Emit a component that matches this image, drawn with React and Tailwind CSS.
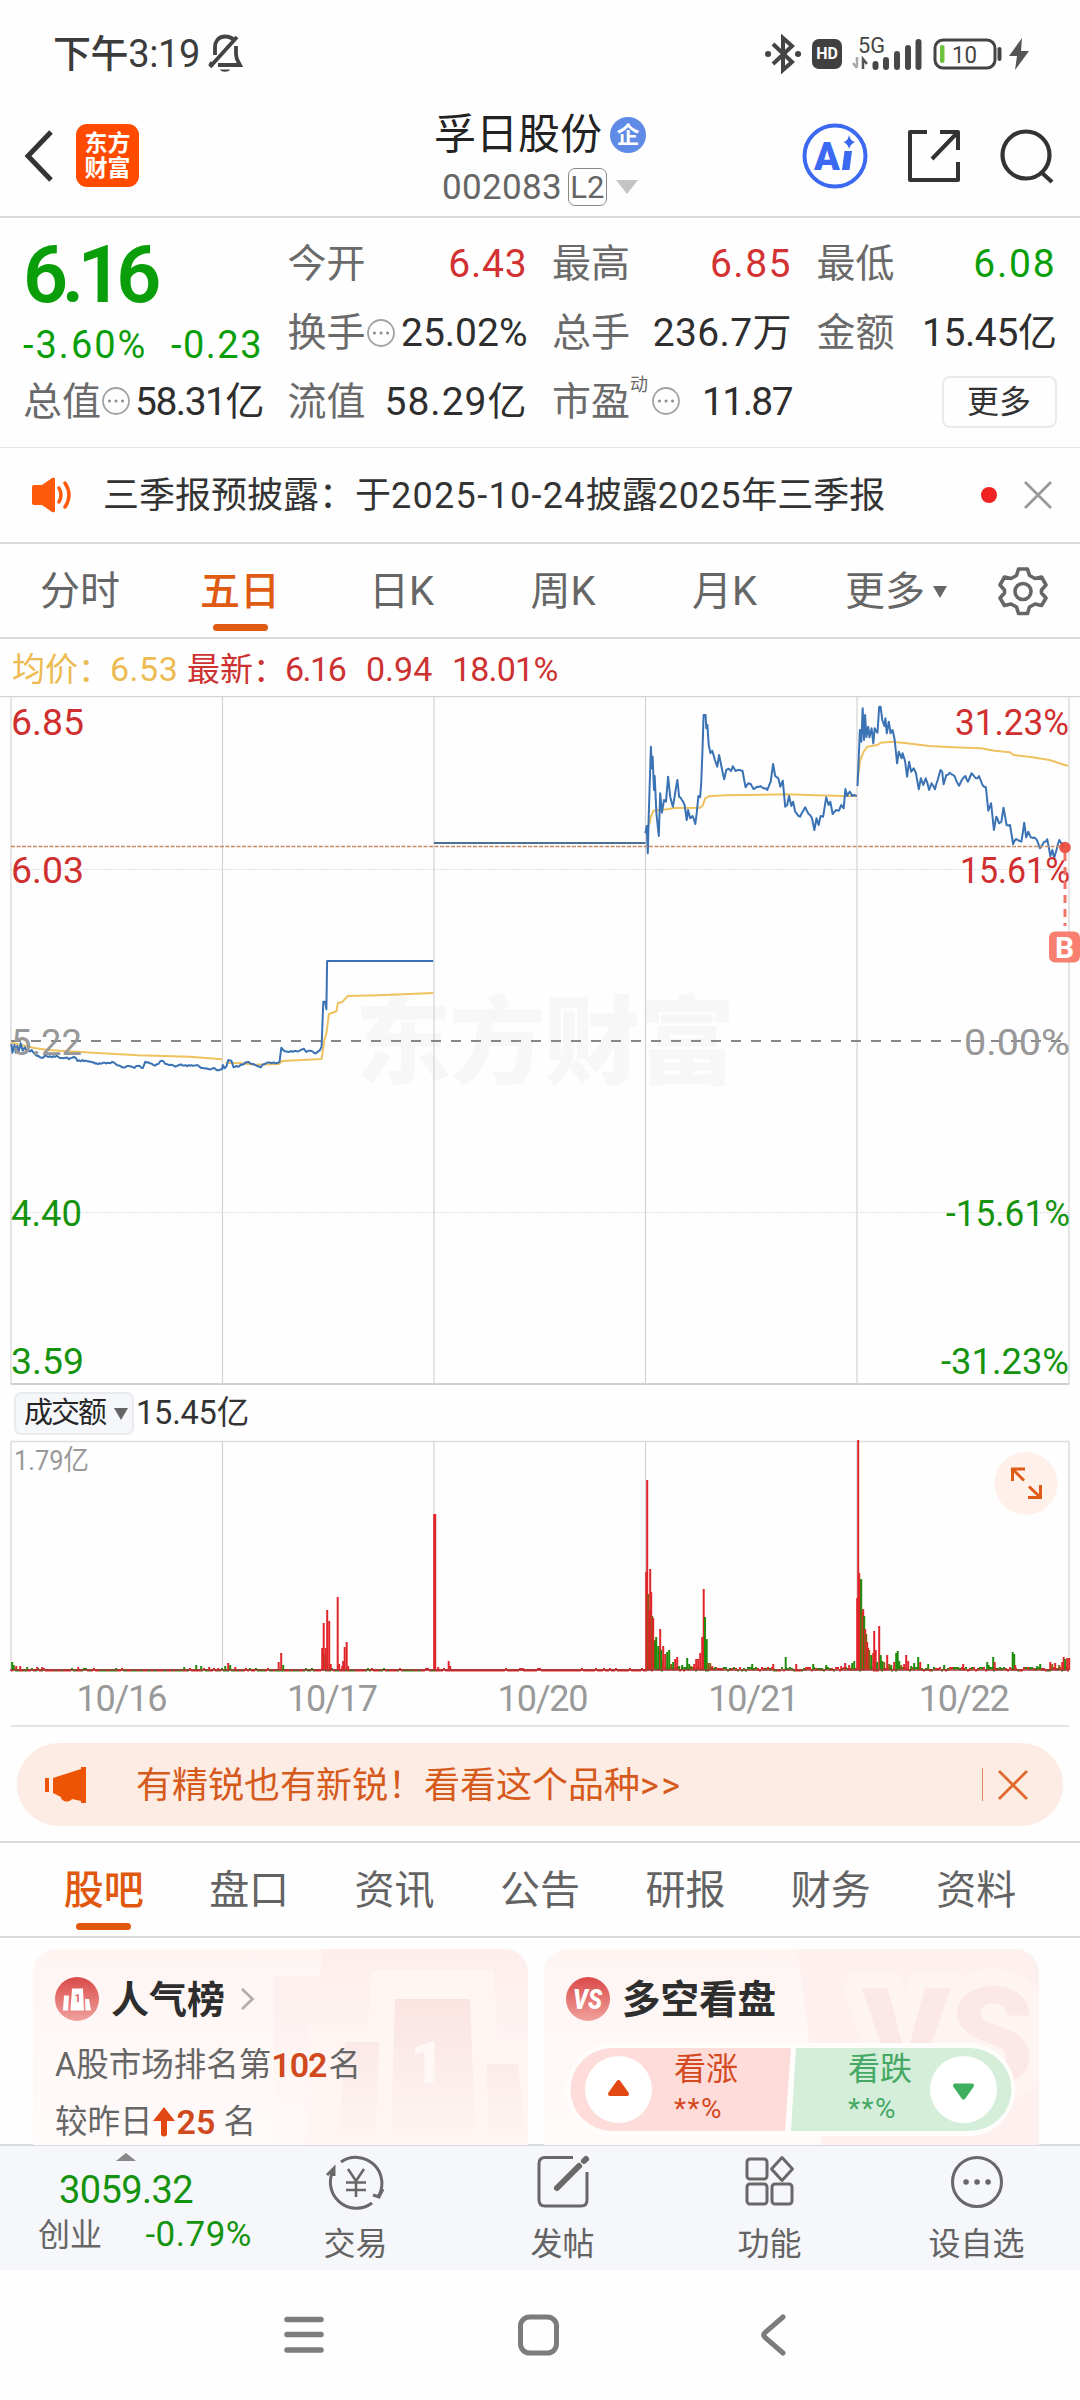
import React from "react";

const GRID_X = [11, 222.5, 434, 645.5, 857, 1069];

/* Intraday series in chart units: x runs 2.904 per pixel, y runs 3 per pixel from the panel top. */
const DAY1 = [33,1062,36,1088,42,1065,46,1088,50,1068,54,1085,60,1060,66,1082,72,1072,78,1085,92,1080,100,1090,112,1098,120,1103,135,1098,150,1102,165,1097,175,1105,190,1103,200,1108,215,1100,225,1113,240,1110,260,1115,280,1120,300,1118,320,1120,330,1117,340,1126,355,1132,375,1128,390,1134,400,1128,415,1134,422,1115,435,1120,450,1127,460,1122,470,1112,480,1122,495,1124,510,1130,525,1123,540,1126,560,1127,575,1126,590,1134,605,1137,620,1134,635,1141,645,1138,647,1125,652,1135,658,1128,663,1110,672,1112,678,1132,690,1130,705,1124,718,1117,730,1122,745,1127,757,1132,768,1122,785,1118,800,1120,812,1115,817,1073,825,1082,840,1086,855,1083,870,1082,882,1076,890,1086,905,1083,918,1090,928,1082,934,1070];
const DAY2_LIMIT = [934,1070,939,935,944,935,948,958,950,813,1258,813];
const DAY4 = [306,430,310,408,313,490,316,370,322,170,325,235,327,200,331,300,333,258,338,370,345,438,349,310,354,368,360,330,366,335,372,260,378,320,386,350,391,320,399,270,404,320,412,330,420,345,426,390,430,360,436,385,443,378,451,402,455,370,460,318,465,322,468,280,472,180,475,75,481,75,483,115,486,105,490,165,495,190,500,182,508,210,515,230,520,195,527,230,535,268,541,240,548,236,555,243,560,229,568,243,580,240,588,242,597,292,605,280,612,282,620,297,630,290,645,292,660,300,670,275,677,222,683,258,692,265,698,290,705,272,712,350,718,345,723,318,730,348,735,335,741,365,755,380,770,352,780,372,790,385,797,420,803,385,809,405,815,378,822,380,831,322,838,345,843,335,850,372,860,360,868,362,875,345,882,355,887,297,892,318,900,305,907,318,915,316,920,318];
const DAY5 = [922,288,925,220,929,120,933,155,937,55,941,150,944,75,948,142,953,110,957,142,963,115,968,160,972,115,980,128,985,50,989,50,994,90,1000,108,1003,85,1007,130,1013,95,1018,130,1024,120,1030,150,1037,220,1042,185,1050,205,1053,190,1060,212,1066,260,1072,215,1078,245,1085,235,1092,250,1100,298,1106,265,1113,285,1120,265,1130,300,1137,280,1147,298,1155,270,1163,240,1168,245,1172,283,1180,255,1190,248,1205,260,1217,287,1225,270,1235,258,1243,275,1253,250,1265,265,1275,258,1285,285,1295,292,1302,362,1310,340,1318,420,1325,380,1333,400,1340,395,1346,353,1355,405,1365,405,1374,462,1383,447,1398,455,1406,398,1412,442,1418,425,1425,442,1440,446,1452,475,1460,462,1473,448,1482,498,1488,480,1493,505,1500,480,1508,450,1513,458,1522,472];
const AVG1 = [33,1058,100,1074,140,1080,270,1088,400,1096,550,1100,645,1108];
const AVG2 = [655,1118,700,1120,740,1124,810,1122,820,1113,934,1107,942,1050,948,1030,955,972,977,964,981,940,995,935,1010,918,1100,916,1258,909];
const AVG4 = [308,420,318,400,322,380,330,362,345,360,370,358,390,354,465,353,472,347,480,325,490,319,540,316,720,313,800,316,885,318,920,318];
const AVG5 = [922,270,930,210,940,185,950,170,980,165,990,158,1020,155,1060,159,1130,168,1200,172,1280,175,1320,182,1365,187,1375,195,1430,202,1480,210,1515,222,1533,228];

const noise = (n) => {
  const s = Math.sin(n * 12.9898) * 43758.5453;
  return s - Math.floor(s);
};

/* Converts a flat series to pixel points, adding small tick movement when amp > 0. */
function series(data, dx = 0, amp = 0) {
  const out = [];
  const put = (x, y) => out.push(`${(x / 2.904 + dx).toFixed(1)},${(y / 3 - 6).toFixed(1)}`);
  for (let i = 0; i < data.length; i += 2) {
    put(data[i], data[i + 1]);
    if (amp && i + 3 < data.length) {
      const gap = data[i + 2] - data[i];
      const n = Math.floor(gap / 4);
      for (let k = 1; k < n; k++) {
        const t = k / n;
        put(data[i] + gap * t, data[i + 1] + (data[i + 3] - data[i + 1]) * t + (noise(i * 7 + k) - 0.5) * amp * 2);
      }
    }
  }
  return out.join(" ");
}

const R = "#e0262b";
const G = "#1f8c0c";
const M = "#8a5a14";
/* Turnover bars: x, height (px), colour */
const BARS = [
  [12,8,G],[13.5,5,G],[16,4,R],[20,4,R],[27,3,G],[37,3,R],[42,3,R],[78,3,R],[116,2,G],[184,3,G],[196,5,G],[201,4,G],[209,3,R],[218,2,R],
  [225,4,G],[228,7,R],[230,5,G],[235,3,R],[278.5,8,R],[281,17,R],[283,5,G],[322,22,R],[323.5,47,R],[325,16,M],[325.5,22,R],[327,60,R],[329,49,R],[330.5,6,R],[337.5,73,R],[339,6,R],[342,4,R],[343,9,R],[344.5,23,R],[346.5,28,R],[348,4,R],
  [434,156,R],[435,156,R],[438,3,R],[448.5,9,R],[450,4,R],[523,2,R],
  [646,98,R],[647,190,R],[648,76,M],[649,60,R],[650,101,R],[651,78,R],[652,54,M],[653,52,R],[654,30,R],[655,29,G],[656,33,G],[658,24,G],[659,22,G],[660,41,R],[661,20,G],[662,10,G],[663,24,R],[665,16,R],[667,18,G],[669,20,G],[671,6,M],[673,8,G],[675,11,R],[677,13,R],[679,4,G],[682,5,G],[684,3,G],[687,12,G],[689,6,G],[691,4,M],[694,6,R],[696,11,R],[698,11,R],[700,17,R],[702,33,R],[703.5,81,R],[704.8,53,G],[706.5,31,G],[708,7,M],[710,7,M],[712,4,R],[715,3,G],
  [752,6,G],[773,6,R],[785.5,13,G],[796,6,R],[806,3,R],[813,6,G],[826,5,G],[841,4,R],[845,7,R],[849,5,R],[852,7,G],[854,9,G],
  [857,72,R],[858,230,R],[859,97,R],[860,90,R],[861,91,G],[862,58,M],[863,61,R],[864,54,G],[865,41,R],[866,36,M],[867,28,R],[868,22,R],[869,20,M],[871,15,G],[873,17,R],[874,39,R],[875.5,20,R],[877,8,G],[879,44,R],[880.5,15,G],[882,9,G],[884,8,M],[887,15,R],[889,6,M],[891,5,G],[894,8,R],[896,17,G],[897.5,19,G],[899,9,G],[901,5,M],[904,6,R],[906,15,R],[908,9,R],[911,4,G],[914,7,G],[918,13,G],[920,8,R],[928,6,G],[944,5,G],[963,6,R],[987,8,G],[988.5,5,G],[993,13,G],[994.5,8,R],[1000,3,G],[1012.5,18,G],[1014,16,G],[1015,5,R],[1030,3,G],[1037,4,G],[1040,6,G],[1050,8,R],[1052,6,M],[1055,7,R],[1059,5,M],[1062,8,R],[1063.5,13,R],[1065,11,G],[1067,12,R],[1069,12,R],
];

function Line({ pts, color }) {
  return <polyline points={pts} fill="none" stroke={color} strokeWidth="2" strokeLinejoin="round" />;
}

function Label({ x, y, w, end, fill, size = 36.5, children }) {
  return (
    <text x={end ? x - w : x} y={y} textLength={w} lengthAdjust="spacingAndGlyphs" fontSize={size} fill={fill}>
      {children}
    </text>
  );
}

function PriceChart() {
  const red = "#cf2f2f";
  const green = "#15930f";
  return (
    <svg width="1080" height="690" viewBox="0 0 1080 690" className="block">
      <text x="355" y="380" textLength="380" fontSize="96" fontWeight="900" fill="#f7f7f7">东方财富</text>
      <path d="M0 .5H1080" stroke="#d4d4d4" strokeWidth="1.4" />
      {GRID_X.map((x) => (
        <path key={x} d={`M${x} 1V688`} stroke="#d3d3d3" strokeWidth="1.2" />
      ))}
      <path d="M11 173.5H1069M11 516.5H1069" stroke="#d6d6d6" strokeWidth="1" strokeDasharray="1.5 1.5" />
      <path d="M11 688H1069" stroke="#d0d0d0" strokeWidth="2" />
      <path d="M11 345H1069" stroke="#878787" strokeWidth="2" strokeDasharray="10 10" />
      <Line pts={series(AVG1)} color="#efc15f" />
      <Line pts={series(AVG2)} color="#efc15f" />
      <Line pts={series(AVG4, 540)} color="#efc15f" />
      <Line pts={series(AVG5, 540)} color="#efc15f" />
      <Line pts={series(DAY1, 0, 3)} color="#3a72b4" />
      <Line pts={series(DAY2_LIMIT)} color="#3a72b4" />
      <path d="M434 147H645.5" stroke="#4b7196" strokeWidth="2" />
      <Line pts={series(DAY4, 540, 3)} color="#3a72b4" />
      <Line pts={series(DAY5, 540, 4)} color="#3a72b4" />
      <path d="M11 150.5H1069" stroke="#c78a63" strokeWidth="1.4" strokeDasharray="4 1.5" />
      <Label x={11} y={39} w={73} fill={red}>6.85</Label>
      <Label x={11} y={187} w={73} fill={red}>6.03</Label>
      <Label x={11} y={359} w={71} fill="#989898">5.22</Label>
      <Label x={11} y={530} w={71} fill={green}>4.40</Label>
      <Label x={11} y={677.5} w={73} fill={green}>3.59</Label>
      <Label end x={1069} y={39} w={114} fill={red}>31.23%</Label>
      <Label end x={1070} y={187} w={110} fill={red}>15.61%</Label>
      <Label end x={1070} y={359} w={106} fill="#989898">0.00%</Label>
      <Label end x={1070} y={530} w={124} fill={green}>-15.61%</Label>
      <Label end x={1069} y={677.5} w={128} fill={green}>-31.23%</Label>
      <path d="M1065 157V230" stroke="#f07468" strokeWidth="3" strokeDasharray="8 6" />
      <circle cx="1065" cy="151.5" r="5.8" fill="#ea4437" fillOpacity=".9" />
      <rect x="1049" y="235.5" width="31" height="31" rx="6" fill="#f98070" />
      <text x="1064.5" y="261.5" textAnchor="middle" fontSize="30" fontWeight="700" fill="#fff">B</text>
    </svg>
  );
}

function VolumeChart() {
  return (
    <svg width="1080" height="234" viewBox="0 0 1080 234" className="block">
      <path d="M11 1.5H1069" stroke="#dedede" strokeWidth="1.4" />
      {GRID_X.map((x) => (
        <path key={x} d={`M${x} 1V230`} stroke="#d3d3d3" strokeWidth="1.2" />
      ))}
      <Label x={14} y={29.5} w={75} fill="#999" size={28}>1.79亿</Label>
      {Array.from({ length: 529 }, (_, i) => (
        <rect key={i} x={11 + i * 2} y={229 - Math.floor(noise(i) * (i > 320 ? 3 : 1.15))} width="2" height="2.5" fill={noise(i * 3) > 0.5 && (i < 212 || i > 320) ? G : R} />
      ))}
      {BARS.map(([x, h, c], i) => (
        <rect key={i} x={x - 0.8} y={Math.max(0, 230 - h)} width="2" height={h} fill={c} />
      ))}
      <path d="M10 230H1069" stroke="#a5383a" strokeWidth="2" strokeOpacity=".75" />
      <circle cx="1026" cy="43.5" r="31.5" fill="#fff0e9" />
      <path d="M1024 40.5 1012.5 29M1012.5 41V29H1025M1029 46.5 1040.5 57.5M1040.5 45V57.5H1028" fill="none" stroke="#df5c16" strokeWidth="3" />
    </svg>
  );
}

function Dots() {
  return (
    <svg width="30" height="30" viewBox="0 0 30 30" className="shrink-0">
      <circle cx="15" cy="14" r="13" fill="none" stroke="#a3a3a3" strokeWidth="1.8" />
      <path d="M8.4 14h.1M15 14h.1M21.5 14h.1" stroke="#8f8f8f" strokeWidth="3" strokeLinecap="round" />
    </svg>
  );
}

function Stat({ label, value, cls = "text-[#2e2e2e]", extra }) {
  return (
    <div className="flex items-center justify-between">
      <span className="flex items-center text-[#6a6a6a]">
        {label}
        {extra}
      </span>
      <span className={cls}>{value}</span>
    </div>
  );
}

function StatusBar() {
  return (
    <div className="flex h-[108px] items-center justify-between pl-[53px] pr-[49px] text-[#3c3c3c]">
      <div className="flex items-center gap-[7px]">
        <span className="text-[38px] leading-none tracking-[-0.4px] font-[450]">下午3:19</span>
        <svg width="36" height="40" viewBox="0 0 36 40" fill="none" stroke="#444" strokeWidth="3.8">
          <path d="M27 6C24 3 20 2.500 18 2.500 11 2.500 8 8 8 13v8M29 12v8c0 5 2 7 4 11H11M5 28 3 32M3 33 30 3" />
          <path d="M13 35.500h10c-1 3-9 3-10 0" fill="#444" stroke="none" />
        </svg>
      </div>
      <div className="flex items-center">
        <svg width="38" height="40" viewBox="0 0 38 40" fill="none" stroke="#444" strokeWidth="4">
          <path d="M9 10 28 28 19 36V4l9 8L9 30" />
          <path d="M4 20h.1M34 20h.1" strokeWidth="6" strokeLinecap="round" />
        </svg>
        <div className="ml-[10px] flex h-[30px] w-[30px] items-center justify-center rounded-[7px] bg-[#404040] text-[16px] font-bold leading-none text-white">HD</div>
        <svg width="70" height="46" viewBox="0 -5 70 46" className="ml-[10px]">
          <text x="6" y="17" fontSize="22" textLength="27" lengthAdjust="spacingAndGlyphs" fill="#444">5G</text>
          <path d="M5 21v10M1 27l4 5" stroke="#aaa" strokeWidth="2.500" fill="none" />
          <path d="M11 33V23l4 5" stroke="#555" strokeWidth="2.500" fill="none" />
          <path d="M23.500 31v-3M34 31V24M45 31V18M56 31V12M66.500 31V6" stroke="#484848" strokeWidth="6" strokeLinecap="round" />
        </svg>
        <svg width="72" height="32" viewBox="0 0 72 32" className="ml-[11px]">
          <rect x="2" y="2" width="60" height="28" rx="8" fill="none" stroke="#444" strokeWidth="3" />
          <rect x="7" y="7" width="4.500" height="18" rx="2" fill="#6cc43a" />
          <path d="M66.500 11v10" stroke="#444" strokeWidth="4" strokeLinecap="round" />
          <text x="19" y="24.500" fontSize="24" textLength="25" lengthAdjust="spacingAndGlyphs" fill="#444">10</text>
        </svg>
        <svg width="24" height="32" viewBox="0 0 24 32" className="ml-[2px]">
          <path d="M15 0 2 18h8L8 32 22 13h-8z" fill="#555" />
        </svg>
      </div>
    </div>
  );
}

function Header() {
  return (
    <div className="grid h-[110px] grid-cols-[1fr_212px_1fr] border-b-2 border-[#dadada]">
      <div className="flex items-center pl-[23px] pb-[13px]">
        <svg width="32" height="54" viewBox="0 0 32 54" fill="none" stroke="#333" strokeWidth="5">
          <path d="M28 3 5 27 28 51" />
        </svg>
        <div className="ml-[21px] flex h-[63px] w-[63px] flex-col items-center justify-center rounded-[11px] bg-[#ff4a00] text-[23px] font-bold leading-[25px] text-white">
          <span>东方</span>
          <span>财富</span>
        </div>
      </div>
      <div className="flex flex-col items-center pt-[4px]">
        <div className="flex h-[46px] items-center gap-[8px]">
          <span className="whitespace-nowrap text-[42px] leading-none text-[#222]">孚日股份</span>
          <span className="flex h-[36px] w-[36px] items-center justify-center rounded-full bg-[#5f8ae6] text-[23px] font-bold leading-none text-white">企</span>
        </div>
        <div className="mt-[9px] flex h-[40px] items-center">
          <span className="text-[35px] leading-none tracking-[0.300px] text-[#666]">002083</span>
          <span className="ml-[6px] flex h-[38px] w-[39px] items-center justify-center rounded-[7px] border-[1.5px] border-[#888] text-[31px] leading-none text-[#666]">L2</span>
          <svg width="22" height="14" viewBox="0 0 22 14" className="ml-[9px]"><path d="M0 0h22L11 14z" fill="#c4c4c4" /></svg>
        </div>
      </div>
      <div className="flex items-center justify-end gap-[39px] pr-[26px] pb-[12px]">
        <svg width="66" height="66" viewBox="0 0 66 66">
          <circle cx="33" cy="33" r="30.500" fill="none" stroke="#3b69f2" strokeWidth="4" />
          <text x="12" y="47" fontSize="38" fontWeight="900" fill="#3b69f2">A</text>
          <path d="M42.500 28h7.500l-2.500 19h-7.500zM47 12q1.500 6 6 7-4.500 2-6 7-1-5-5.500-7 4.500-1 5.500-7" fill="#3b69f2" />
        </svg>
        <svg width="54" height="56" viewBox="0 0 54 56" fill="none" stroke="#333" strokeWidth="4" strokeLinejoin="round">
          <path d="M20 4H3V52H51V34M33 4H51V22M50 5 25 31" />
        </svg>
        <svg width="54" height="56" viewBox="0 0 54 56" fill="none" stroke="#333" strokeWidth="4.200">
          <circle cx="26" cy="27" r="23.500" />
          <path d="M41 44 52 54" />
        </svg>
      </div>
    </div>
  );
}

function Quote() {
  const red = "text-[#d23232]";
  return (
    <div className="h-[230px] border-b border-[#e6e6e6] pt-[11px] pl-[23px] text-[39px] leading-none">
      <div className="grid grid-cols-[240px_240px_240px_240px] grid-rows-[70px_69px_68px] gap-x-[24.500px] whitespace-nowrap">
        <div className="row-span-2 text-[#0a9f0a]">
          <div className="flex h-[92px] items-center text-[79px] font-semibold tracking-[-6.500px]">6.16</div>
          <div className="flex h-[47px] items-center justify-between text-[38px]">
            <span className="tracking-[2px]">-3.60%</span>
            <span className="tracking-[1.500px]">-0.23</span>
          </div>
        </div>
        <Stat label="今开" value="6.43" cls={`${red} tracking-[0.800px]`} />
        <Stat label="最高" value="6.85" cls={`${red} tracking-[1.500px]`} />
        <Stat label="最低" value="6.08" cls="text-[#0a9f0a] tracking-[1.800px]" />
        <Stat label="换手" value="25.02%" extra={<Dots />} />
        <Stat label="总手" value="236.7万" cls="text-[#2e2e2e] tracking-[0.400px]" />
        <Stat label="金额" value="15.45亿" cls="text-[#2e2e2e] tracking-[-0.400px]" />
        <div className="flex items-center"><div className="w-full"><Stat label="总值" value="58.31亿" cls="text-[#2e2e2e] tracking-[-1.500px]" extra={<Dots />} /></div></div>
        <Stat label="流值" value="58.29亿" cls="text-[#2e2e2e] tracking-[1px]" />
        <Stat label="市盈" value="11.87" cls="text-[#2e2e2e] tracking-[-1.600px]" extra={<><span className="mb-[34px] text-[18px] leading-none">动</span><span className="ml-[3px]"><Dots /></span></>} />
        <div className="flex items-center justify-end">
          <div className="flex h-[52px] w-[115px] items-center justify-center rounded-[8px] border-2 border-[#e8eaeb] text-[32px] text-[#333]">更多</div>
        </div>
      </div>
    </div>
  );
}

function Notice() {
  return (
    <div className="flex h-[96px] items-center border-b-2 border-[#dadada] pl-[30px] pr-[27px]">
      <svg width="44" height="36" viewBox="0 0 44 36">
        <path d="M2 10q0-2 2-2h8L22 1q3-1 3 1v32q0 2-3 1L12 28H4q-2 0-2-2z" fill="#ff5a0c" />
        <path d="M29 11q4 7 0 14M35 6q8 12 0 24" fill="none" stroke="#ff5a0c" strokeWidth="3.500" strokeLinecap="round" />
      </svg>
      <span className="ml-[29px] flex-1 whitespace-nowrap pt-[2px] text-[36px] leading-none text-[#333]">
        三季报预披露：于<span className="tracking-[1.300px]">2025-10-24</span>披露<span className="tracking-[0.600px]">2025</span>年三季报
      </span>
      <span className="h-[16px] w-[16px] rounded-full bg-[#f02222]" />
      <svg width="30" height="30" viewBox="0 0 30 30" className="ml-[26px]"><path d="M2 2 28 28M28 2 2 28" stroke="#999" strokeWidth="2.800" /></svg>
    </div>
  );
}

function PeriodTabs() {
  const tabs = [
    ["分时", "w-[160px]"],
    ["五日", "w-[160px]"],
    ["日K", "w-[163px]"],
    ["周K", "w-[160px]"],
    ["月K", "w-[163px]"],
  ];
  return (
    <div className="flex h-[95px] items-center border-b-2 border-[#dadada] text-[40px] leading-none text-[#666]">
      {tabs.map(([t, w]) => (
        <div key={t} className={`${w} relative flex h-full items-center justify-center pt-[2px]`}>
          <span className={t === "五日" ? "font-medium text-[#df5a12]" : ""}>{t}</span>
          {t === "五日" && <span className="absolute bottom-[6px] h-[7px] w-[55px] rounded-full bg-[#df5a12]" />}
        </div>
      ))}
      <div className="ml-[39px] flex items-center pt-[2px]">
        更多
        <svg width="14" height="12" viewBox="0 0 14 12" className="ml-[8px]"><path d="M0 0h14L7 12z" fill="#666" /></svg>
      </div>
      <svg width="50" height="50" viewBox="0 0 50 50" className="ml-[51px]" fill="none" stroke="#666" strokeWidth="3.600" strokeLinejoin="round">
        <path d="M20.500 3h9l2 6.500 5.500 3 6.500-1.500L48 19l-4.500 5v3L48 32l-4.500 7.500-6.500-1.500-5.500 3-2 6.500h-9l-2-6.500-5.500-3-6.500 1.500L2 32l4.500-5v-3L2 19l4.500-8 6.500 1.500 5.500-3z" />
        <circle cx="25" cy="25.500" r="8" />
      </svg>
    </div>
  );
}

function Legend() {
  return (
    <div className="flex h-[57px] items-center pl-[12px] pt-[3px] text-[34px] leading-none whitespace-pre text-[#cd3232]">
      <span className="w-[98px] text-[33px] text-[#ecbb52]">均价：</span>
      <span className="w-[77px] tracking-[0.500px] text-[#ecbb52]">6.53</span>
      <span className="w-[98px] text-[33px]">最新：</span>
      <span className="w-[81px] tracking-[-1.500px]">6.16</span>
      <span className="w-[86px]">0.94</span>
      <span className="tracking-[-0.800px]">18.01%</span>
    </div>
  );
}

function Banner() {
  return (
    <div className="h-[116px] border-b-2 border-[#dadada] pt-[16px]">
      <div className="mx-[17px] flex h-[83px] items-center rounded-[42px] bg-[#fdece3] pl-[28px] pr-[34px]">
        <svg width="42" height="38" viewBox="0 0 42 38" fill="#ed5406">
          <path d="M0 12h4v14H0zM8 12 36 3V1h5v36h-5v-2l-9-2c-2 4-11 3-11-2L8 27z" />
        </svg>
        <span className="ml-[49px] flex-1 pt-[2px] text-[36px] leading-none text-[#d65a1c]">有精锐也有新锐！看看这个品种<span className="tracking-[2.500px]">&gt;&gt;</span></span>
        <span className="h-[33px] w-[1.500px] bg-[#d98558]" />
        <svg width="32" height="32" viewBox="0 0 32 32" className="ml-[14px]"><path d="M2 2 30 30M30 2 2 30" stroke="#e06a2c" strokeWidth="2.800" /></svg>
      </div>
    </div>
  );
}

function SectionTabs() {
  const tabs = ["股吧", "盘口", "资讯", "公告", "研报", "财务", "资料"];
  return (
    <div className="grid h-[95px] grid-cols-7 border-b-2 border-[#dadada] px-[31px] text-[40px] leading-none text-[#636363]">
      {tabs.map((t, i) => (
        <div key={t} className={`relative flex items-center justify-center pt-[3px] ${i === 0 ? "font-medium text-[#e0580e]" : ""}`}>
          {t}
          {i === 0 && <span className="absolute bottom-[6px] h-[7px] w-[55px] rounded-full bg-[#e0580e]" />}
        </div>
      ))}
    </div>
  );
}

function RoundBadge({ children }) {
  return (
    <svg width="44" height="44" viewBox="0 0 44 44">
      <defs>
        <linearGradient id="badge" x1="0" y1="0" x2="0" y2="1">
          <stop offset="0" stopColor="#d94a48" />
          <stop offset="1" stopColor="#f0a19d" />
        </linearGradient>
      </defs>
      <circle cx="22" cy="22" r="22" fill="url(#badge)" />
      {children}
    </svg>
  );
}

function RankCard() {
  return (
    <div className="relative h-[196px] w-[495px] overflow-hidden rounded-t-[24px] bg-gradient-to-b from-[#fef5f3] to-[#fffbfa] text-[#666]">
      <svg width="495" height="196" viewBox="0 0 495 196" className="absolute inset-0">
        <defs>
          <linearGradient id="rank" x1="0" y1="0" x2="0" y2="1">
            <stop offset="0" stopColor="#fdeeec" />
            <stop offset="1" stopColor="#fffaf9" />
          </linearGradient>
          <linearGradient id="podium" x1="0" y1="0" x2="0" y2="1">
            <stop offset="0" stopColor="#fae4e2" />
            <stop offset="1" stopColor="#fdf4f2" />
          </linearGradient>
        </defs>
        <path d="M289 0H495V196H241V28H287z" fill="url(#rank)" />
        <path d="M339 22H461L464 90H495V196H272L276 76H335z" fill="#fff5f3" />
        <path d="M362 50H437L442 181H358zM312 93H346L343 181H306zM454 115H485L492 181H455z" fill="url(#podium)" />
        <text x="377" y="134" fontSize="60" fontWeight="900" fill="#fff7f5">1</text>
      </svg>
      <div className="relative px-[22px] pt-[28px]">
        <div className="flex h-[44px] items-center">
          <RoundBadge>
            <path d="M17 11.500h11l1 22H15.500zM9 18.500h5L13 33.500H8zM30 22h4l2 11.500h-5.500z" fill="#fff" />
            <text x="19.500" y="25" fontSize="11" fontWeight="700" fill="#dd6663">1</text>
          </RoundBadge>
          <span className="ml-[12px] pt-[2px] text-[38px] font-bold leading-none text-[#2e2e2e]">人气榜</span>
          <svg width="16" height="24" viewBox="0 0 16 24" className="ml-[15px]"><path d="M2 2 12.500 12 2 22" fill="none" stroke="#b3aeae" strokeWidth="2.800" /></svg>
        </div>
        <div className="mt-[24px] flex h-[40px] items-center text-[32.500px] leading-none">
          A股市场排名第<b className="text-[34px] font-semibold tracking-[-1px] text-[#d04a1e]">102</b><span className="ml-[2px]">名</span>
        </div>
        <div className="mt-[17px] flex h-[40px] items-center text-[32.500px] leading-none">
          较昨日
          <svg width="22" height="30" viewBox="0 0 22 30"><path d="M11 0 22 14H14V28q-3 3-6 0V14H0z" fill="#e24912" /></svg>
          <b className="ml-[2px] text-[34px] font-semibold text-[#d04a1e]">25</b>
          <span className="ml-[8px]">名</span>
        </div>
      </div>
    </div>
  );
}

function VoteCard() {
  return (
    <div className="relative h-[196px] w-[495px] overflow-hidden rounded-t-[24px] bg-gradient-to-b from-[#fef5f3] to-[#fffbfa]">
      <svg width="495" height="196" viewBox="0 0 495 196" className="absolute inset-0">
        <path d="M254 0H495V196H278z" fill="#fef0ee" />
        <text x="318" y="134" fontSize="134" fontWeight="900" fill="#fce8e7" stroke="#fef5f3" strokeWidth="34" strokeLinejoin="round" paintOrder="stroke" textLength="172" lengthAdjust="spacingAndGlyphs">VS</text>
      </svg>
      <div className="relative pl-[22px] pt-[28px]">
        <div className="flex h-[44px] items-center">
          <RoundBadge>
            <text x="7" y="32" fontSize="27" fontWeight="900" fontStyle="italic" fill="#fff" textLength="29" lengthAdjust="spacingAndGlyphs">VS</text>
          </RoundBadge>
          <span className="ml-[12px] pt-[2px] text-[38.500px] font-bold leading-none text-[#2e2e2e]">多空看盘</span>
        </div>
        <div className="relative mt-[22px] h-[93px] w-[449px] overflow-hidden rounded-full bg-[#fffdfc]">
          <svg width="449" height="93" viewBox="0 0 449 93" className="absolute inset-0">
            <path d="M46 5H225L219 88H46A41.500 41.500 0 0 1 46 5z" fill="#fddcda" />
            <path d="M230 5H404A41.500 41.500 0 0 1 404 88H225z" fill="#d4eeda" />
            <circle cx="52.500" cy="46.500" r="33.500" fill="#fff" />
            <circle cx="397.500" cy="46.500" r="33.500" fill="#fff" />
            <path d="M52.500 39 61 51H44z" fill="#e24912" stroke="#e24912" strokeWidth="4" strokeLinejoin="round" />
            <path d="M397.500 54.500 406 42.500H389z" fill="#3daf5e" stroke="#3daf5e" strokeWidth="4" strokeLinejoin="round" />
          </svg>
          <div className="relative flex h-full justify-between pl-[108px] pr-[103px] pt-[7px] text-[32px] leading-[38px]">
            <div className="text-[#d4491f]">看涨<div className="text-[28px] leading-[41px] tracking-[1.500px]">**%</div></div>
            <div className="text-[#45a864]">看跌<div className="text-[28px] leading-[41px] tracking-[1.500px]">**%</div></div>
          </div>
        </div>
      </div>
    </div>
  );
}

function ToolItem({ label, children }) {
  return (
    <div className="flex flex-1 flex-col items-center pt-[7px]">
      <svg width="60" height="60" viewBox="0 0 60 60" fill="none" stroke="#686868" strokeWidth="3">{children}</svg>
      <span className="mt-[13px] text-[32px] leading-[36px] text-[#636363]">{label}</span>
    </div>
  );
}

function Toolbar() {
  return (
    <div className="flex h-[126px] border-t-2 border-[#d9dbde] bg-[#f6f7fa]">
      <div className="flex w-[252px] flex-col items-center text-[#15930f]">
        <svg width="20" height="8" viewBox="0 0 20 8" className="mt-[7px]"><path d="M0 8 10 0 20 8z" fill="#888" /></svg>
        <div className="mt-[9px] text-[38px] leading-[40px] tracking-[-0.600px]">3059.32</div>
        <div className="mt-[4px] ml-[37px] flex w-[215px] items-center justify-between pl-px text-[35px] leading-[42px]">
          <span className="text-[32px] text-[#666]">创业</span>
          <span className="tracking-[0.500px]">-0.79%</span>
        </div>
      </div>
      <ToolItem label="交易">
        <path d="M15 9A26 26 0 0 1 52 44M57 36l-4 8-6-2M46 50A26 26 0 0 1 8 16M1 22l7-7v8" />
        <path d="M22 16l8 12 8-12M30 28v16M20 29.500h20M20 37h20" strokeWidth="2.600" />
      </ToolItem>
      <ToolItem label="发帖">
        <path d="M40 4.500H12q-6 0-6 6V47q0 6 6 6H48q6 0 6-6V19" />
        <path d="M24 35 46 13" strokeWidth="6" strokeLinecap="round" />
        <path d="M51 8l2-2" strokeWidth="6" strokeLinecap="round" />
      </ToolItem>
      <ToolItem label="功能">
        <rect x="7" y="6" width="20" height="20" rx="3" />
        <rect x="7" y="31" width="20" height="20" rx="3" />
        <rect x="32" y="31" width="20" height="20" rx="3" />
        <path d="M42 4.500 52.500 16 42 27.500 31.500 16z" strokeLinejoin="round" />
      </ToolItem>
      <ToolItem label="设自选">
        <circle cx="30" cy="29" r="24.500" />
        <path d="M19 29h.1M30 29h.1M41 29h.1" strokeWidth="5.500" strokeLinecap="round" />
      </ToolItem>
    </div>
  );
}

function NavBar() {
  return (
    <div className="flex h-[130px] items-center justify-between pl-[284px] pr-[293px]">
      <svg width="40" height="44" viewBox="0 0 40 44"><path d="M3 6.500H37M3 21.500H37M3 37H37" stroke="#7c7c7c" strokeWidth="5.500" strokeLinecap="round" /></svg>
      <svg width="44" height="44" viewBox="0 0 44 44" className="mr-[8px]"><rect x="4.500" y="4" width="36" height="36" rx="9" fill="none" stroke="#7c7c7c" strokeWidth="5" /></svg>
      <svg width="28" height="44" viewBox="0 0 28 44"><path d="M24 4 6 19.500q-2.500 2.500 0 5L24 40" fill="none" stroke="#7c7c7c" strokeWidth="5" strokeLinecap="round" /></svg>
    </div>
  );
}

export default function App() {
  const dates = ["10/16", "10/17", "10/20", "10/21", "10/22"];
  return (
    <div className="h-[2400px] w-[1080px] overflow-hidden bg-[#fefefe] font-[Roboto,'Noto_Sans_CJK_SC',sans-serif]">
      <StatusBar />
      <Header />
      <Quote />
      <Notice />
      <PeriodTabs />
      <Legend />
      <PriceChart />
      <div className="flex h-[54px] items-center pl-[14px] text-[33px] leading-none">
        <div className="flex h-[43px] w-[120px] items-center rounded-[7px] border-2 border-[#e9ebee] bg-[#f6f7fa] pl-[8px] pt-px text-[29px] tracking-[-2px] text-[#262626]">
          成交额
          <svg width="14" height="12" viewBox="0 0 14 12" className="ml-[9px]"><path d="M0 0h14L7 12z" fill="#666" /></svg>
        </div>
        <span className="ml-[2px] text-[32.500px] tracking-[-0.200px] text-[#333]">15.45亿</span>
      </div>
      <VolumeChart />
      <div className="mx-[11px] grid h-[53px] grid-cols-5 border-b-2 border-[#e4e4e4] pt-[5px] pl-[5px] text-center text-[36px] leading-[40px] tracking-[-1.200px] text-[#999]">
        {dates.map((d) => (
          <span key={d}>{d}</span>
        ))}
      </div>
      <Banner />
      <SectionTabs />
      <div className="flex h-[206px] gap-[16px] pl-[33px] pt-[11px]">
        <RankCard />
        <VoteCard />
      </div>
      <Toolbar />
      <NavBar />
    </div>
  );
}
